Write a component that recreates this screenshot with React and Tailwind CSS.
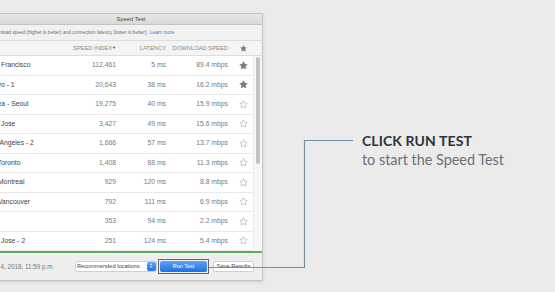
import React from "react";

const rows = [
  { city: "San Francisco", index: "112,461", latency: "5 ms", speed: "89.4 mbps", fav: true },
  { city: "Tokyo - 1", index: "20,643", latency: "38 ms", speed: "16.2 mbps", fav: true },
  { city: "Korea - Seoul", index: "19,275", latency: "40 ms", speed: "15.9 mbps", fav: false },
  { city: "San Jose", index: "3,427", latency: "49 ms", speed: "15.6 mbps", fav: false },
  { city: "Los Angeles - 2", index: "1,666", latency: "57 ms", speed: "13.7 mbps", fav: false },
  { city: "CA Toronto", index: "1,408", latency: "88 ms", speed: "11.3 mbps", fav: false },
  { city: "CA Montreal", index: "929", latency: "120 ms", speed: "8.8 mbps", fav: false },
  { city: "CA Vancouver", index: "792", latency: "111 ms", speed: "6.9 mbps", fav: false },
  { city: "Rio", index: "353", latency: "94 ms", speed: "2.2 mbps", fav: false },
  { city: "San Jose - 2", index: "251", latency: "124 ms", speed: "5.4 mbps", fav: false },
];

const Star = ({ filled, size = 9 }) => (
  <svg width={size} height={size} viewBox="0 0 24 24">
    <polygon
      points="12,2 15.09,8.26 22,9.27 17,14.14 18.18,21.02 12,17.77 5.82,21.02 7,14.14 2,9.27 8.91,8.26"
      fill={filled ? "#7a7a7a" : "none"}
      stroke={filled ? "#7a7a7a" : "#a3a3a3"}
      strokeWidth="1.6"
      strokeLinejoin="round"
    />
  </svg>
);

export default function App() {
  return (
    <div className="relative w-[555px] h-[292px] overflow-hidden bg-[#ebebeb] font-['Liberation_Sans',Arial,sans-serif]">
      <div className="flex">
        {/* Window */}
        <div className="mt-[13px] ml-[-12px] w-[275px] h-[268px] flex flex-col border border-[#c6c6c6] bg-[#eeeeee] shadow-sm">
          {/* Title bar */}
          <div className="h-[11px] flex items-center justify-center bg-gradient-to-b from-[#e6e6e6] to-[#dadada] border-b border-[#c4c4c4] text-[5.8px] text-[#4a4a4a]">
            <span className="pl-[11px]">Speed Test</span>
          </div>
          {/* Description */}
          <div className="h-[15px] flex items-center bg-[#f1f1f1] text-[4.8px] text-[#6f6f6f] whitespace-nowrap">
            <span className="ml-[1.5px]">download speed (higher is better) and connection latency (lower is better).</span>
            <span className="ml-[2px] text-[#4a7ec0]">Learn more</span>
          </div>
          {/* Header */}
          <div className="h-[16px] flex items-center bg-[#f4f4f4] border-t border-b border-[#dddddd] text-[5.8px] uppercase text-[#8a8a8a]">
            <div className="w-[71px]" />
            <div className="w-[56px] text-right">Speed Index<span className="text-[4px] align-middle text-[#444]">▼</span></div>
            <div className="w-[50px] text-right">Latency</div>
            <div className="w-[62px] text-right">Download Speed</div>
            <div className="w-[25px] pl-[5px] flex justify-center">
              <Star filled size={7} />
            </div>
          </div>
          {/* Rows */}
          <div className="flex bg-white">
            <div className="w-[264px]">
              {rows.map((r) => (
                <div key={r.city} className="h-[19.5px] flex items-center border-b border-[#e9e9e9] text-[6.8px]">
                  <div className="ml-[-2px] w-[73px] whitespace-nowrap text-[#444]">{r.city}</div>
                  <div className="w-[56px] text-right text-[#7a7a7a]">{r.index}</div>
                  <div className="w-[50px] text-right text-[#7a7a7a]">{r.latency}</div>
                  <div className="w-[62px] text-right text-[#7a7a7a]">{r.speed}</div>
                  <div className="w-[25px] pl-[5px] flex justify-center">
                    <Star filled={r.fav} />
                  </div>
                </div>
              ))}
            </div>
            <div className="w-[9px] bg-[#f7f7f7] border-l border-[#ececec] pt-[1px] flex justify-center">
              <div className="w-[4px] h-[107px] rounded-full bg-[#c3c3c3]" />
            </div>
          </div>
          <div className="h-[1.5px] bg-[#5bb05c]" />
          {/* Footer */}
          <div className="flex-1 flex items-center bg-[#eeeeee] whitespace-nowrap">
            <div className="w-[86px] text-[6.3px] text-[#777]">Oct 4, 2018, 11:59 p.m.</div>
            <div className="w-[82px] h-[11px] flex items-center justify-between bg-white border border-[#cfcfcf] rounded-[2px] text-[5.7px] text-[#444] pl-[1px]">
              <span>Recommended locations</span>
              <span className="w-[9px] h-[9px] mr-[0.5px] rounded-[2px] bg-gradient-to-b from-[#5ea6f8] to-[#1f72e6] flex flex-col items-center justify-center leading-none text-white text-[3px]">
                <span>▲</span>
                <span>▼</span>
              </span>
            </div>
            <div className="ml-[1px] p-[1px] border-[1.5px] border-[#5f6670]">
              <div className="w-[47px] h-[11px] flex items-center justify-center rounded-[2px] bg-gradient-to-b from-[#5ba4f8] to-[#1d6fe5] text-white text-[5.5px]">
                Run Test
              </div>
            </div>
            <div className="ml-[4px] w-[41px] h-[11px] flex items-center justify-center bg-white border border-[#cfcfcf] rounded-[2px] text-[5.8px] text-[#444]">
              Save Results
            </div>
          </div>
        </div>

        {/* Callout */}
        <div className="ml-[99px] mt-[133px] font-['Lato',sans-serif]">
          <div className="text-[14px] leading-[16px] font-bold tracking-[0.1px] text-[#2b3440]">CLICK RUN TEST</div>
          <div className="mt-[1px] text-[14.4px] leading-[20px] text-[#6b7078]">to start the Speed Test</div>
        </div>
      </div>

      {/* Connector */}
      <svg className="absolute inset-0 pointer-events-none" width="555" height="292">
        <path d="M209 267.5 H304.5 V140.5 H353" fill="none" stroke="#7d8c99" strokeWidth="1.2" />
      </svg>
    </div>
  );
}
